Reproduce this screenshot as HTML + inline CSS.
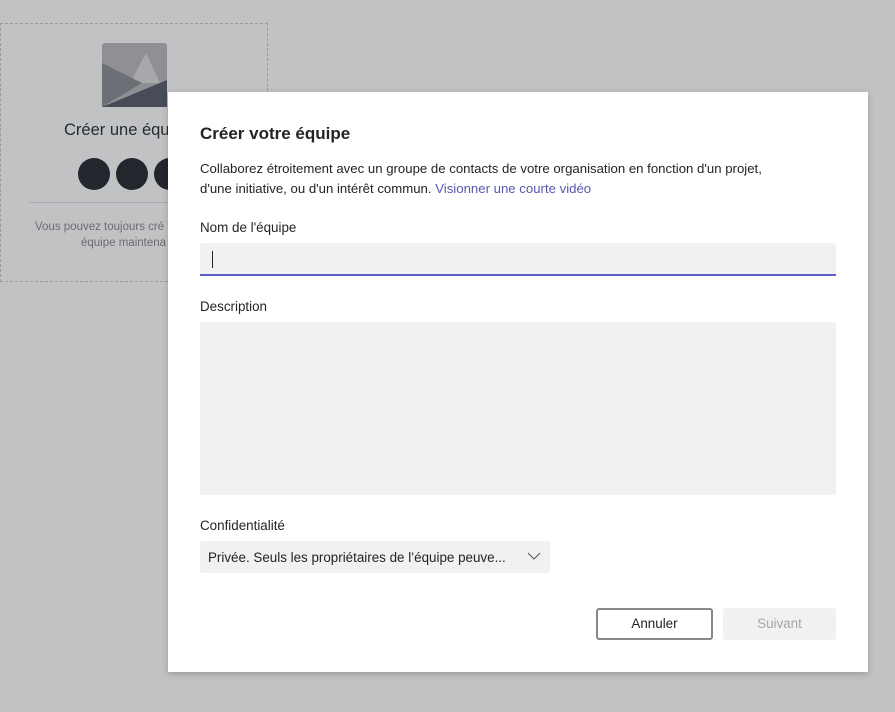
<!DOCTYPE html>
<html><head><meta charset="utf-8"><style>
*{box-sizing:border-box;margin:0;padding:0}
body{width:895px;height:712px;background:#c1c2c4;font-family:"Liberation Sans",sans-serif;color:#252423;position:relative;overflow:hidden}
.card{position:absolute;left:0;top:23px;width:268px;height:259px;border:1px dashed #9a9b9e}
.abs{position:absolute}
.modal{position:absolute;left:168px;top:92px;width:700px;height:580px;background:#fff;box-shadow:0 2px 6px rgba(0,0,0,.2)}
.modal .t{position:absolute;left:32px;top:32px;font-size:17px;font-weight:bold;color:#252423}
.p{position:absolute;left:32px;top:67px;font-size:13.2px;line-height:20px;color:#252423;width:608px}
.lbl{position:absolute;left:32px;font-size:13.4px;color:#252423}
.field{position:absolute;left:32px;width:636px;background:#f0f1f3;border-radius:3px}
</style></head><body>
<div class="card">
<svg class="abs" style="left:101px;top:19px" width="65" height="64" viewBox="0 0 65 64">
<rect width="65" height="64" rx="3" fill="#8f9094"/>
<polygon points="28,40 44,10 58,40" fill="#a8a9ad"/>
<polygon points="0,20 40,40 0,64" fill="#6c6f76"/>
<polygon points="0,64 65,37 65,64" fill="#474c58"/>
</svg>
<div class="abs" style="left:63px;top:97px;font-size:16.5px;color:#252a33;white-space:nowrap">Créer une équ</div>
<div class="abs" style="left:77px;top:134px;width:32px;height:32px;border-radius:50%;background:#23262c"></div>
<div class="abs" style="left:115px;top:134px;width:32px;height:32px;border-radius:50%;background:#23262c"></div>
<div class="abs" style="left:153px;top:134px;width:32px;height:32px;border-radius:50%;background:#23262c"></div>
<div class="abs" style="left:28px;top:178px;width:240px;height:1px;background:#a9aaad"></div>
<div class="abs" style="left:34px;top:195px;font-size:11.5px;color:#6b6c70;white-space:nowrap;line-height:16px">Vous pouvez toujours cré<br><span style="padding-left:46px">équipe maintena</span></div>
</div>
<div class="modal">
<div class="t">Créer votre équipe</div>
<div class="p">Collaborez étroitement avec un groupe de contacts de votre organisation en fonction d'un projet,<br>d'une initiative, ou d'un intérêt commun. <span style="color:#5558af">Visionner une courte vidéo</span></div>
<div class="lbl" style="top:128px">Nom de l'équipe</div>
<div class="field" style="top:151px;height:33px;border-bottom:2px solid #5b5fc7;border-radius:3px 3px 0 0"><div class="abs" style="left:12px;top:8px;width:1px;height:17px;background:#252423"></div></div>
<div class="lbl" style="top:207px">Description</div>
<div class="field" style="top:230px;height:173px"></div>
<div class="lbl" style="top:426px">Confidentialité</div>
<div class="field" style="top:449px;width:350px;height:32px;font-size:13.4px;padding:9px 8px;white-space:nowrap">Privée. Seuls les propriétaires de l’équipe peuve...
<svg class="abs" style="left:327px;top:11px" width="14" height="9" viewBox="0 0 14 9"><path d="M1 1 L7 7 L13 1" stroke="#555" fill="none" stroke-width="1"/></svg></div>
<div class="abs" style="left:428px;top:516px;width:117px;height:32px;border:2px solid #8a8886;border-radius:3px;text-align:center;line-height:28px;font-size:13.4px">Annuler</div>
<div class="abs" style="left:555px;top:516px;width:113px;height:32px;background:#f0f1f3;border-radius:3px;text-align:center;line-height:32px;font-size:13.4px;color:#a6a6a8">Suivant</div>
</div>
</body></html>
